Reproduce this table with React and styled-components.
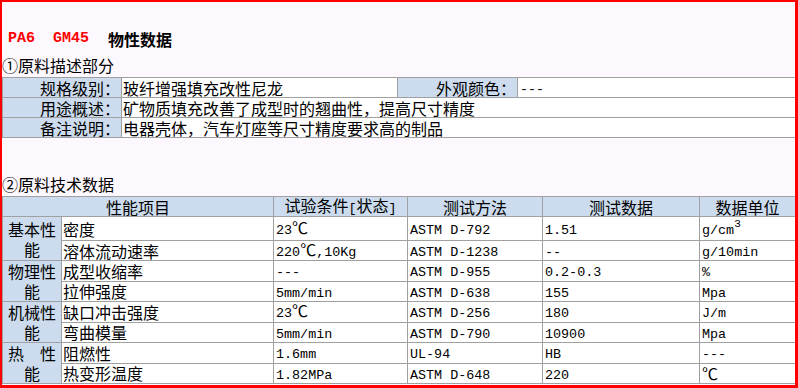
import React from "react";
import styled, { createGlobalStyle } from "styled-components";

const Global = createGlobalStyle`
  html, body { margin: 0; padding: 0; background: #fdf8fd; }
  body { font-family: "Noto Sans CJK SC", "Noto Sans", sans-serif; }
`;

const CJK = `"Noto Sans CJK SC", "Noto Sans", sans-serif`;
const MONO = `"Liberation Mono", "DejaVu Sans Mono", monospace`;

const Frame = styled.div`
  box-sizing: border-box;
  width: 798px;
  height: 388px;
  border: 2px solid #ff0000;
  border-right-width: 3px;
  border-bottom-width: 3px;
  background: #fdf8fd;
  overflow: hidden;
  display: flex;
  flex-direction: column;
  font-family: ${CJK};
  font-size: 16px;
  color: #000;
`;

const Title = styled.div`
  margin-top: 27px;
  padding-left: 6px;
  height: 20px;
  line-height: 20px;
  font-size: 16px;
  font-weight: bold;
  display: flex;
  align-items: center;
  gap: 19px;
`;

const Code = styled.span`
  font-family: ${MONO};
  font-size: 15px;
  font-weight: bold;
  color: #ff0000;
  white-space: pre;
`;

const Heading = styled.div`
  margin-top: ${(p) => p.$top}px;
  height: 20px;
  line-height: 20px;
  font-size: 16px;
`;

const Table = styled.table`
  margin-top: 2px;
  width: 100%;
  table-layout: fixed;
  border-collapse: collapse;
  background: #ffffff;
  border: 1px solid #a0a0a0;
  flex-shrink: 0;
`;

const Row = styled.tr`
  height: ${(p) => p.$h}px;
`;

const Cell = styled.td`
  border: 1px solid #a0a0a0;
  padding: 0 ${(p) => (p.$pad != null ? p.$pad : 1)}px;
  font-size: 16px;
  line-height: 16px;
  white-space: nowrap;
  vertical-align: middle;
  text-align: ${(p) => p.$align || "left"};
  background: ${(p) => (p.$label ? "#ccdcee" : "#ffffff")};

  sup {
    font-family: ${MONO};
    font-size: 11px;
    line-height: 0;
    vertical-align: 7px;
  }
`;

const GroupLine = styled.div`
  height: 20px;
  line-height: 20px;
  text-align: center;
`;

const Latin = styled.span`
  font-family: ${MONO};
  font-size: 13.4px;
  line-height: 14px;
  white-space: pre;
`;

const runs = (s) =>
  (s.match(/[\x00-\x7f]+|[^\x00-\x7f]+/g) || []).map((r, i) =>
    /^[\x00-\x7f]/.test(r) ? <Latin key={i}>{r}</Latin> : <span key={i}>{r}</span>
  );

const Text = ({ v }) => (typeof v === "string" ? <>{runs(v)}</> : v);

const rows = [
  { group: ["基本性", "能"], item: "密度", cond: "23℃", method: "ASTM D-792", data: "1.51", unit: <><Latin>g/cm</Latin><sup>3</sup></> },
  { item: "溶体流动速率", cond: "220℃,10Kg", method: "ASTM D-1238", data: "--", unit: "g/10min" },
  { group: ["物理性", "能"], item: "成型收缩率", cond: "---", method: "ASTM D-955", data: "0.2-0.3", unit: "%" },
  { item: "拉伸强度", cond: "5mm/min", method: "ASTM D-638", data: "155", unit: "Mpa" },
  { group: ["机械性", "能"], item: "缺口冲击强度", cond: "23℃", method: "ASTM D-256", data: "180", unit: "J/m" },
  { item: "弯曲模量", cond: "5mm/min", method: "ASTM D-790", data: "10900", unit: "Mpa" },
  { group: ["热  性", "能"], item: "阻燃性", cond: "1.6mm", method: "UL-94", data: "HB", unit: "---" },
  { item: "热变形温度", cond: "1.82MPa", method: "ASTM D-648", data: "220", unit: "℃" },
];

const descCols = [119, 276, 120, 278];
const techCols = [59, 212, 134, 135, 157, 96];

export default function App() {
  return (
    <>
      <Global />
      <Frame>
        <Title>
          <Code>PA6  GM45</Code>
          <span>物性数据</span>
        </Title>
        <Heading $top={6}>①原料描述部分</Heading>
        <Table>
          <colgroup>
            {descCols.map((w, i) => (
              <col key={i} style={{ width: w }} />
            ))}
          </colgroup>
          <tbody>
            <Row $h={20}>
              <Cell $label $align="right">规格级别：</Cell>
              <Cell>玻纤增强填充改性尼龙</Cell>
              <Cell $label $align="right">外观颜色：</Cell>
              <Cell $pad={2}><Text v="---" /></Cell>
            </Row>
            <Row $h={20}>
              <Cell $label $align="right">用途概述：</Cell>
              <Cell colSpan={3}>矿物质填充改善了成型时的翘曲性，提高尺寸精度</Cell>
            </Row>
            <Row $h={20}>
              <Cell $label $align="right">备注说明：</Cell>
              <Cell colSpan={3}>电器壳体，汽车灯座等尺寸精度要求高的制品</Cell>
            </Row>
          </tbody>
        </Table>
        <Heading $top={36}>②原料技术数据</Heading>
        <Table>
          <colgroup>
            {techCols.map((w, i) => (
              <col key={i} style={{ width: w }} />
            ))}
          </colgroup>
          <tbody>
            <Row $h={19}>
              <Cell $label $align="center" colSpan={2}>性能项目</Cell>
              <Cell $label $align="center"><Text v="试验条件[状态]" /></Cell>
              <Cell $label $align="center">测试方法</Cell>
              <Cell $label $align="center">测试数据</Cell>
              <Cell $label $align="center">数据单位</Cell>
            </Row>
            {rows.map((r, i) => (
              <Row key={i} $h={i === 0 ? 24 : 20}>
                {r.group && (
                  <Cell $label rowSpan={2} $pad={0}>
                    {r.group.map((g, j) => (
                      <GroupLine key={j}><Text v={g} /></GroupLine>
                    ))}
                  </Cell>
                )}
                <Cell>{r.item}</Cell>
                <Cell $pad={2}><Text v={r.cond} /></Cell>
                <Cell $pad={2}><Text v={r.method} /></Cell>
                <Cell $pad={2}><Text v={r.data} /></Cell>
                <Cell $pad={2}><Text v={r.unit} /></Cell>
              </Row>
            ))}
          </tbody>
        </Table>
      </Frame>
    </>
  );
}
